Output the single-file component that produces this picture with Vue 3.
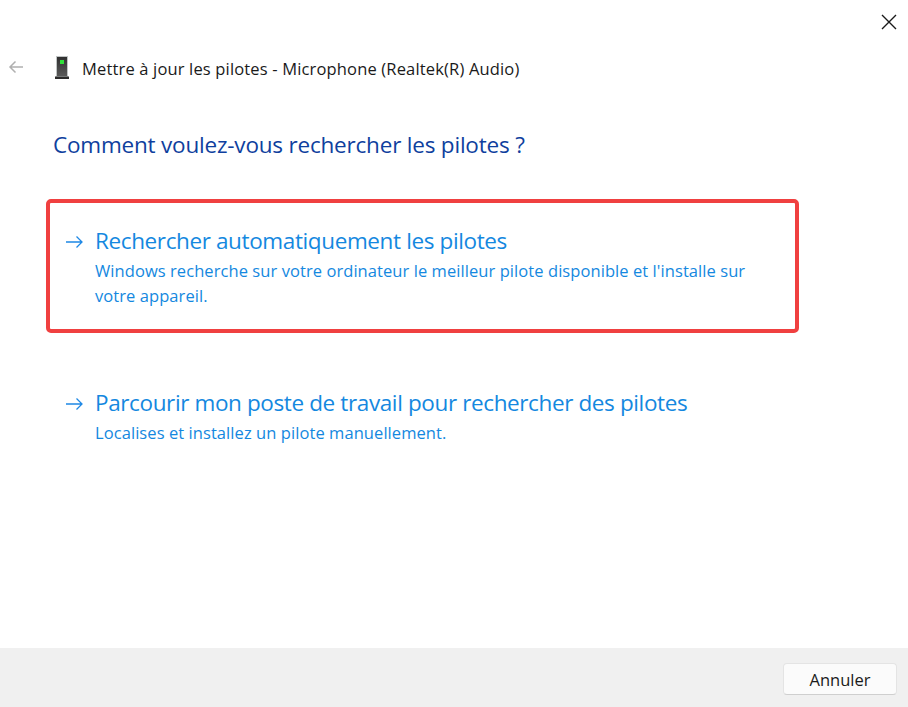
<template>
  <div class="dialog">
    <div class="main">
      <div class="title-bar">
        <button class="close" aria-label="Fermer">
          <svg width="16" height="16" viewBox="0 0 16 16">
            <path d="M1 1 L15 15 M15 1 L1 15" stroke="#1a1a1a" stroke-width="1.4" fill="none" />
          </svg>
        </button>
      </div>

      <div class="header">
        <svg class="back" width="16" height="14" viewBox="0 0 16 14">
          <path d="M15 7 H2 M7.500 1.500 L2 7 L7.500 12.500" stroke="#b0b0b0" stroke-width="1.500" fill="none" />
        </svg>
        <svg class="device" width="14" height="24" viewBox="0 0 14 24">
          <defs>
            <linearGradient id="body" x1="0" y1="0" x2="0" y2="1">
              <stop offset="0" stop-color="#2f2f2f" />
              <stop offset="1" stop-color="#5a5a5a" />
            </linearGradient>
          </defs>
          <rect x="1.500" y="0.500" width="11" height="20" fill="url(#body)" stroke="#c0c4c4" />
          <rect x="5" y="4" width="4" height="4" fill="#2fe03a" />
          <rect x="0" y="20.500" width="14" height="2.500" fill="#2a2a2a" />
        </svg>
        <span class="header-text">Mettre à jour les pilotes - Microphone (Realtek(R) Audio)</span>
      </div>

      <h1 class="question">Comment voulez-vous rechercher les pilotes ?</h1>

      <div class="options">
        <div
          v-for="opt in options"
          :key="opt.title"
          class="option"
          :class="{ selected: opt.selected }"
        >
          <svg class="arrow" width="18" height="14" viewBox="0 0 18 14">
            <path d="M1 7 H17 M11.500 1.500 L17 7 L11.500 12.500" stroke="#1e88e5" stroke-width="1.300" fill="none" />
          </svg>
          <div class="option-body">
            <div class="option-title">{{ opt.title }}</div>
            <div class="option-desc">{{ opt.desc }}</div>
          </div>
        </div>
      </div>
    </div>

    <div class="footer">
      <button class="cancel">Annuler</button>
    </div>
  </div>
</template>

<script setup>
const options = [
  {
    title: 'Rechercher automatiquement les pilotes',
    desc: "Windows recherche sur votre ordinateur le meilleur pilote disponible et l'installe sur votre appareil.",
    selected: true,
  },
  {
    title: 'Parcourir mon poste de travail pour rechercher des pilotes',
    desc: 'Localises et installez un pilote manuellement.',
    selected: false,
  },
]
</script>

<style>
html, body {
  margin: 0;
  background: #fff;
}
</style>

<style scoped>
.dialog {
  width: 908px;
  height: 707px;
  display: flex;
  flex-direction: column;
  font-family: "Open Sans", "Noto Sans", sans-serif;
  background: #fff;
  overflow: hidden;
}

.main {
  flex: 1;
}

.title-bar {
  display: flex;
  justify-content: flex-end;
  padding: 14px 11px 0 0;
  height: 40px;
  box-sizing: border-box;
}

.close {
  border: none;
  background: none;
  padding: 0;
  width: 16px;
  height: 16px;
  display: flex;
}

.header {
  display: flex;
  align-items: center;
  padding-left: 8px;
  height: 24px;
  margin-top: 16px;
}

.back {
  margin-bottom: 3px;
}

.device {
  margin-left: 31px;
}

.header-text {
  margin-left: 13px;
  font-size: 16.500px;
  letter-spacing: 0.16px;
  color: #1a1a1a;
}

.question {
  margin: 49px 0 0 53px;
  font-size: 22.500px;
  font-weight: 400;
  line-height: 32px;
  letter-spacing: -0.2px;
  color: #0f3f9e;
}

.options {
  margin: 38px 0 0 46px;
  width: 753px;
}

.option {
  display: flex;
  box-sizing: border-box;
  height: 134px;
  padding: 23px 18px 0 15px;
  border: 4px solid transparent;
  border-radius: 5px;
}

.option + .option {
  margin-top: 28px;
  height: 100px;
}

.option.selected {
  border-color: #f04040;
}

.arrow {
  margin-top: 9px;
  flex: none;
}

.option-body {
  margin-left: 12px;
}

.option-title {
  font-size: 22.500px;
  line-height: 30px;
  letter-spacing: -0.38px;
  color: #1488e0;
}

.option-desc {
  margin-top: 3px;
  max-width: 680px;
  font-size: 16.500px;
  line-height: 24.500px;
  letter-spacing: 0.07px;
  color: #1488e0;
}

.footer {
  height: 59px;
  background: #f0f0f0;
  display: flex;
  justify-content: flex-end;
  align-items: center;
  padding: 3px 11px 0 0;
  box-sizing: border-box;
}

.cancel {
  width: 114px;
  height: 32px;
  padding: 0;
  background: #fbfbfb;
  border: 1px solid #e4e4e4;
  border-bottom-color: #cfcfcf;
  border-radius: 4px;
  font-family: inherit;
  font-size: 16.500px;
  color: #1a1a1a;
}
</style>
